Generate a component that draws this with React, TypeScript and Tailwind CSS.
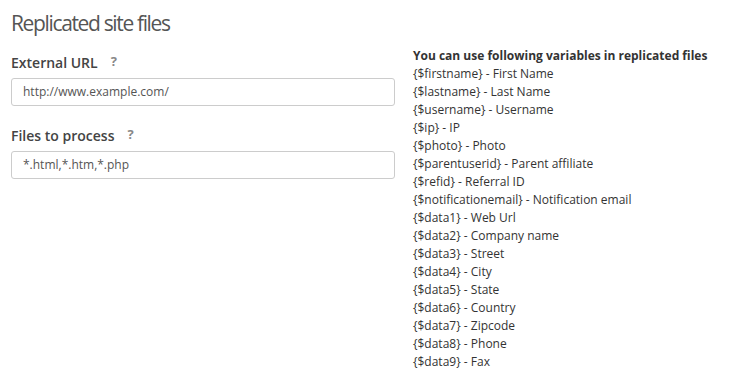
import React from "react";

const vars: [string, string][] = [
  ["{$firstname}", "First Name"],
  ["{$lastname}", "Last Name"],
  ["{$username}", "Username"],
  ["{$ip}", "IP"],
  ["{$photo}", "Photo"],
  ["{$parentuserid}", "Parent affiliate"],
  ["{$refid}", "Referral ID"],
  ["{$notificationemail}", "Notification email"],
  ["{$data1}", "Web Url"],
  ["{$data2}", "Company name"],
  ["{$data3}", "Street"],
  ["{$data4}", "City"],
  ["{$data5}", "State"],
  ["{$data6}", "Country"],
  ["{$data7}", "Zipcode"],
  ["{$data8}", "Phone"],
  ["{$data9}", "Fax"],
];

export default function App() {
  return (
    <div
      className="w-[731px] h-[384px] bg-white text-[#333] overflow-hidden"
      style={{ fontFamily: '"Open Sans", sans-serif' }}
    >
      <div className="pl-[11px] pt-[8px]">
        <h1 className="text-[21px] leading-[30px] tracking-[-1.35px] text-[#555] font-normal">Replicated site files</h1>
      </div>
      <div className="flex pl-[11px]">
        <div className="w-[384px] pt-[13px]">
          <div className="flex items-center h-[22px] text-[14px] font-semibold text-[#444]">
            External URL
            <span className="ml-[13px] text-[13px] font-bold text-[#888]">?</span>
          </div>
          <div className="mt-[5px] h-[28px] border border-[#ccc] rounded-[3px] px-[11px] flex items-center text-[12px] text-[#555]">
            http://www.example.com/
          </div>
          <div className="mt-[18px] flex items-center h-[22px] text-[14px] font-semibold text-[#444]">
            Files to process
            <span className="ml-[13px] text-[13px] font-bold text-[#888]">?</span>
          </div>
          <div className="mt-[5px] h-[28px] border border-[#ccc] rounded-[3px] px-[11px] flex items-center text-[12px] text-[#555]">
            *.html,*.htm,*.php
          </div>
        </div>
        <div className="ml-[18px] pt-[9px] text-[12px] leading-[18px] text-[#333]">
          <div className="font-bold">You can use following variables in replicated files</div>
          {vars.map(([k, v]) => (
            <div key={k}>
              {k} - {v}
            </div>
          ))}
        </div>
      </div>
    </div>
  );
}
